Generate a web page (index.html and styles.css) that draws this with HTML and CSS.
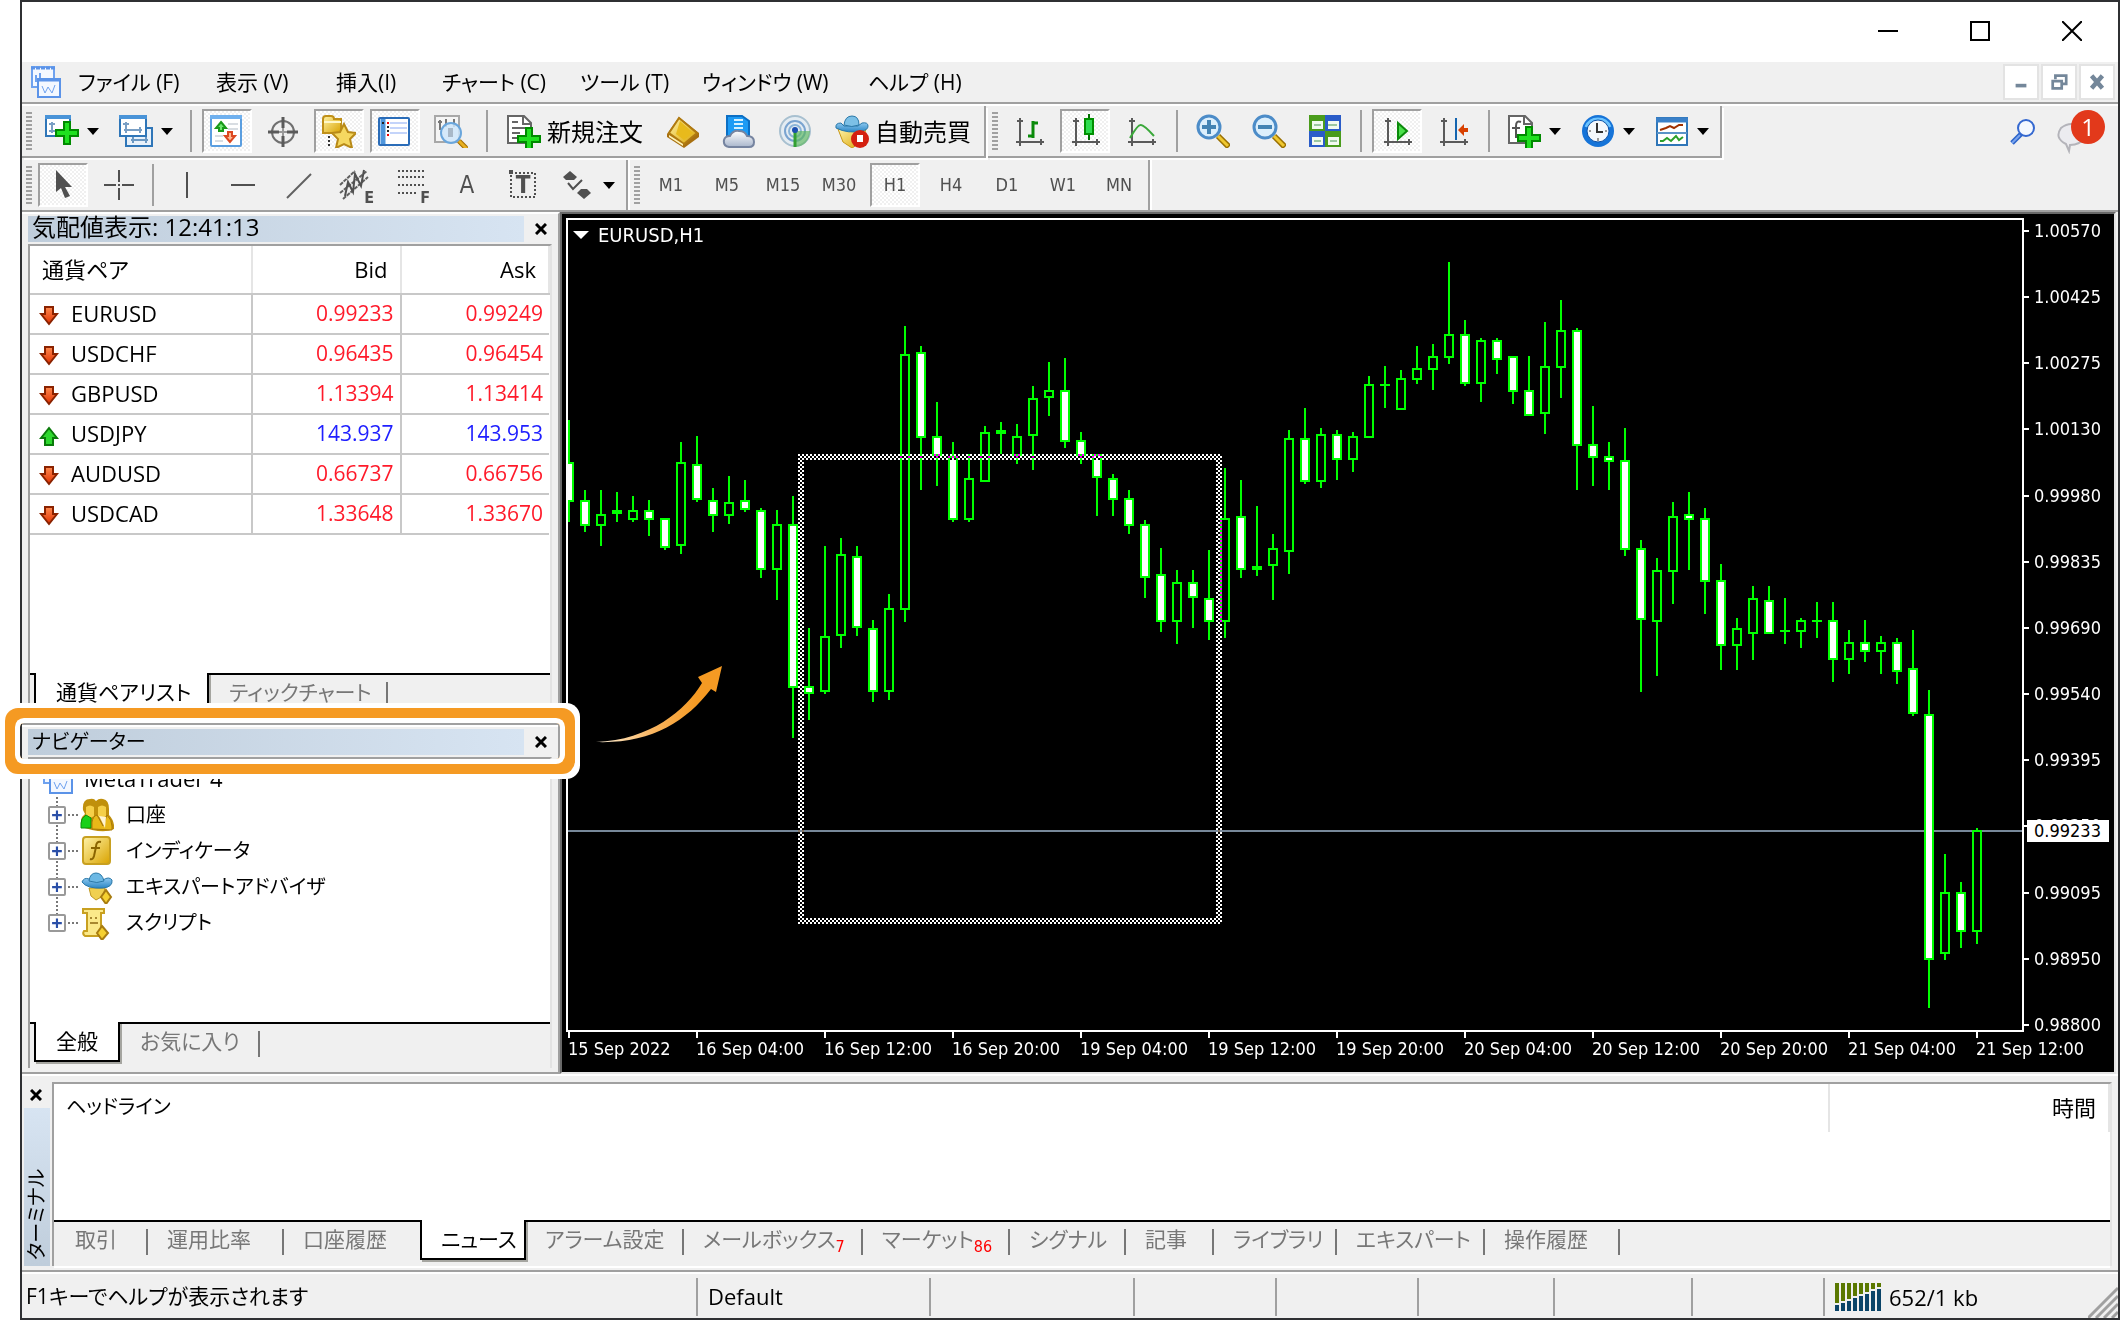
FILE: index.html
```html
<!DOCTYPE html>
<html lang="ja">
<head>
    <meta charset="UTF-8">
    <meta name="viewport" content="width=device-width, initial-scale=1.0">
    <title>MetaTrader 4</title>
    <link rel="stylesheet" href="styles.css">
</head>
<body>
    <svg class="defs" aria-hidden="true">
        <defs>
            <linearGradient id="gGold" x1="0" y1="0" x2="1" y2="1"><stop offset="0" stop-color="#fff3a8"/><stop offset="1" stop-color="#d9a300"/></linearGradient>
            <linearGradient id="gBlue" x1="0" y1="0" x2="0" y2="1"><stop offset="0" stop-color="#8cc8f0"/><stop offset="1" stop-color="#2b86c4"/></linearGradient>
            <linearGradient id="gRed" x1="0" y1="0" x2="0" y2="1"><stop offset="0" stop-color="#ff8a50"/><stop offset="1" stop-color="#e03000"/></linearGradient>
            <linearGradient id="gCloud" x1="0" y1="0" x2="0" y2="1"><stop offset="0" stop-color="#ffffff"/><stop offset="1" stop-color="#a9b6cc"/></linearGradient>
            <g id="plus"><path d="M8 0h8v8h8v8h-8v8H8v-8H0V8h8z" fill="#008a00"/><path d="M10 2h4v8h8v4h-8v8h-4v-8H2v-4h8z" fill="#1fe01f"/></g>
            <g id="axes" fill="none" stroke="#5a5a5a" stroke-width="2"><path d="M8 4v28M4 28h28"/><path d="M5 7h6M29 25v6" /></g>
            <symbol id="i-app" viewBox="0 0 34 34"><rect x="2" y="2" width="22" height="20" fill="#f4f8ff" stroke="#6fa2ef" stroke-width="2"/><path d="M1 3h24" stroke="#5b93e8" stroke-width="3" stroke-dasharray="4 1"/><path d="M6 10v6h8M10 8v10" fill="none" stroke="#6fa2ef" stroke-width="2"/><rect x="8" y="14" width="22" height="18" fill="#f4f8ff" stroke="#5b93e8" stroke-width="2"/><path d="M7 15h24" stroke="#5b93e8" stroke-width="3"/><path d="M12 21l3 7 3-6 4 6 3-8" fill="none" stroke="#6fa2ef" stroke-width="1"/></symbol>
            <symbol id="i-newchart" viewBox="0 0 34 34"><rect x="1" y="2" width="24" height="20" fill="#fff" stroke="#2f76b8" stroke-width="2"/><path d="M0 3h26" stroke="#4a94d8" stroke-width="4"/><path d="M7 8v11M4 10h6M4 17h10" stroke="#7a9fc4" stroke-width="2"/><use href="#plus" x="10" y="7"/></symbol>
            <symbol id="i-profiles" viewBox="0 0 34 34"><rect x="7" y="14" width="26" height="18" fill="#e8f1fa" stroke="#2f76b8" stroke-width="2"/><path d="M12 26h17M14 23v6M27 23v6" stroke="#6b98c2" stroke-width="2"/><rect x="1" y="2" width="26" height="20" fill="#fff" stroke="#2f76b8" stroke-width="2"/><path d="M0 3h28" stroke="#4a94d8" stroke-width="4"/><path d="M7 8v11M4 10h6M5 16h18M21 13v6" stroke="#7a9fc4" stroke-width="2"/></symbol>
            <symbol id="i-market" viewBox="0 0 34 34"><rect x="1" y="2" width="30" height="30" rx="1" fill="#fff" stroke="#5a9ee0" stroke-width="2"/><path d="M0 3h32" stroke="#6fb0ee" stroke-width="4"/><path d="M18 10h10M18 15h10M5 22h8M5 27h8" stroke="#d8dde2" stroke-width="2"/><path d="M11 8l5 6h-3v3H9v-3H6z" fill="#6ee86e" stroke="#1a9a1a" stroke-width="2"/><path d="M20 28l-5-6h3v-4h4v4h3z" fill="#ffb890" stroke="#dc4820" stroke-width="2"/></symbol>
            <symbol id="i-cross" viewBox="0 0 34 34"><circle cx="17" cy="18" r="11" fill="none" stroke="#707070" stroke-width="2"/><path d="M17 3v11M17 22v11M2 18h11M21 18h11" stroke="#5a5a5a" stroke-width="3"/><path d="M17 14v8M13 18h8" stroke="#999" stroke-width="2"/></symbol>
            <symbol id="i-nav" viewBox="0 0 34 34"><path d="M1 19V5q0-3 3-3h5q3 0 3 3h7v14z" fill="url(#gGold)" stroke="#c09018" stroke-width="2"/><path d="M2 8h17" stroke="#fff8c8" stroke-width="2"/><path d="M7 22v11" stroke="#333" stroke-width="2" stroke-dasharray="2 2"/><path d="M22 10l4 8 8 1-6 6 2 9-8-4-8 4 2-9-6-6 8-1z" fill="#f5d860" stroke="#b88a18" stroke-width="2"/></symbol>
            <symbol id="i-terminal" viewBox="0 0 34 34"><rect x="1" y="4" width="30" height="27" rx="1" fill="#fff" stroke="#2a6cb8" stroke-width="2"/><path d="M5 5v25" stroke="#4f96dc" stroke-width="5"/><path d="M12 9h17M12 14h17M12 19h17" stroke="#c4d4fa" stroke-width="2"/><path d="M10 8v2M10 20v2" stroke="#e00" stroke-width="2"/><path d="M10 12v2M10 16v2M5 8v2" stroke="#222" stroke-width="2"/></symbol>
            <symbol id="i-tester" viewBox="0 0 34 34"><rect x="1" y="2" width="24" height="26" fill="#f5f5f5" stroke="#a8a8a8" stroke-width="2"/><path d="M6 6v10M4 8h4M12 5v8M20 5v8" stroke="#777" stroke-width="2"/><path d="M25 27l9 9" stroke="#a06a00" stroke-width="5"/><path d="M25 27l9 9" stroke="#e8b020" stroke-width="3"/><circle cx="17" cy="19" r="10" fill="#cfe6fa" fill-opacity=".85" stroke="#6aa6dc" stroke-width="2"/><path d="M14 14v9h5v-9z" fill="#a8b8c8"/></symbol>
            <symbol id="i-order" viewBox="0 0 34 34"><path d="M1 2h16l7 7v20H1z" fill="#fff" stroke="#666" stroke-width="2"/><path d="M16 2v8h8" fill="none" stroke="#666" stroke-width="2"/><path d="M5 8h6M5 14h14M5 19h8M5 24h6" stroke="#666" stroke-width="2"/><use href="#plus" x="10" y="13"/></symbol>
            <symbol id="i-book" viewBox="0 0 34 34"><path d="M1 20L13 3l20 16v4L18 34 1 23z" fill="#a87010"/><path d="M13 4l18 15-13 11L3 19z" fill="url(#gGold)" stroke="#b07a10" stroke-width="2"/><path d="M14 7l13 12-9 7-8-6z" fill="#e8ba1c"/><path d="M3 21l14 9v2L3 23z" fill="#fff4b8"/></symbol>
            <symbol id="i-server" viewBox="0 0 34 34"><path d="M5 2h15l7 5v15H5z" fill="#1d9bf5" stroke="#0c6fc4" stroke-width="2"/><path d="M12 6h9M12 10h9M12 14h9" stroke="#d4f0ff" stroke-width="2"/><path d="M7 33q-6-1-5-7 1-4 6-4 3-6 9-5 6 0 8 5 7 0 7 6 0 5-5 5z" fill="url(#gCloud)" stroke="#7684a0" stroke-width="2"/></symbol>
            <symbol id="i-signal" viewBox="0 0 34 34"><circle cx="17" cy="17" r="15" fill="#e4ecf2" stroke="#a8c0d0" stroke-width="2"/><circle cx="17" cy="17" r="10" fill="none" stroke="#7aa4d0" stroke-width="2"/><circle cx="17" cy="17" r="6" fill="none" stroke="#8ab4d8" stroke-width="2"/><path d="M17 17v16q14-1 15-16z" fill="#5cb85c" fill-opacity=".65"/><path d="M17 17v16" stroke="#32a032" stroke-width="3"/><circle cx="17" cy="16" r="3" fill="#1b4fb0"/></symbol>
            <symbol id="i-auto" viewBox="0 0 34 34"><path d="M3 15h28l-4 13-10 6-9-6z" fill="url(#gGold)" stroke="#c89818" stroke-width="1"/><path d="M1 14q-1-5 5-5l3 3h14l4-3q6-1 6 3 0 4-6 5-14 3-26-3z" fill="url(#gBlue)" stroke="#2a78a8" stroke-width="1"/><path d="M9 11q1-9 8-9t7 9q-7 3-15 0z" fill="#7cc0e6" stroke="#2a78a8" stroke-width="1"/><circle cx="25" cy="25" r="9" fill="#d42010"/><rect x="22" y="21" width="6" height="7" fill="#fff"/></symbol>
            <symbol id="i-bars" viewBox="0 0 34 34"><use href="#axes"/><path d="M21 7v17M21 9h5M16 22h5" stroke="#0a8a0a" stroke-width="3" fill="none"/></symbol>
            <symbol id="i-candles" viewBox="0 0 34 34"><use href="#axes"/><path d="M21 0v26" stroke="#007000" stroke-width="2"/><rect x="17" y="5" width="8" height="15" fill="#2fdc4f" stroke="#009000" stroke-width="2"/></symbol>
            <symbol id="i-line" viewBox="0 0 34 34"><use href="#axes"/><path d="M6 24q8-14 11-13 3 0 13 11" fill="none" stroke="#3aa83a" stroke-width="2"/></symbol>
            <g id="glass"><path d="M22 22l11 11" stroke="#9a7000" stroke-width="6"/><path d="M22 22l10 10" stroke="#f0c830" stroke-width="3"/><circle cx="13" cy="13" r="11" fill="#dceffc" stroke="#4c8cc8" stroke-width="3"/></g>
            <symbol id="i-zoomin" viewBox="0 0 34 34"><use href="#glass"/><path d="M13 6v14M6 13h14" stroke="#4484b4" stroke-width="4"/></symbol>
            <symbol id="i-zoomout" viewBox="0 0 34 34"><use href="#glass"/><path d="M6 13h14" stroke="#4484b4" stroke-width="4"/></symbol>
            <symbol id="i-tile" viewBox="0 0 34 34"><path d="M1 1h16v16H1zM17 17h16v16H17z" fill="#4a9c1c"/><path d="M17 1h16v16H17zM1 17h16v16H1z" fill="#2a5cc8"/><path d="M4 7h11v8H4zM20 7h11v8H20zM4 23h11v8H4zM20 23h11v8H20z" fill="#f2faf0"/><path d="M6 11h7M20 11h9M6 27h7M22 27h7" stroke="#9cc8a0" stroke-width="2"/></symbol>
            <symbol id="i-scroll" viewBox="0 0 34 34"><use href="#axes"/><path d="M18 9l9 8-9 8z" fill="#4ce04c" stroke="#0a8a0a" stroke-width="2"/></symbol>
            <symbol id="i-shift" viewBox="0 0 34 34"><use href="#axes"/><path d="M20 4v22" stroke="#1565b0" stroke-width="2"/><path d="M22 16l6-6v4h4v4h-4v4z" fill="#d84000"/></symbol>
            <symbol id="i-ind" viewBox="0 0 34 34"><path d="M2 2h16l7 7v20H2z" fill="#fff" stroke="#666" stroke-width="2"/><path d="M17 2v8h8" fill="none" stroke="#666" stroke-width="2"/><path d="M14 8q-5-2-5 4v12M5 14h8" fill="none" stroke="#555" stroke-width="2"/><use href="#plus" x="10" y="12"/></symbol>
            <symbol id="i-clock" viewBox="0 0 34 34"><circle cx="17" cy="17" r="16" fill="#1674d8"/><path d="M5 13a13 13 0 0 1 24 0" stroke="#6cc4ff" stroke-width="3" fill="none"/><circle cx="17" cy="17" r="11" fill="#f4f8fc" stroke="#0c52a8" stroke-width="1"/><path d="M16 9v9h6" fill="none" stroke="#333" stroke-width="2"/><path d="M17 24v3M8 17h2M26 17h-2" stroke="#999" stroke-width="2"/></symbol>
            <symbol id="i-tmpl" viewBox="0 0 34 34"><rect x="2" y="4" width="30" height="27" fill="#fff" stroke="#2f76b8" stroke-width="2"/><path d="M1 6h32" stroke="#3a80c8" stroke-width="5"/><path d="M2 19h30" stroke="#5a94c8" stroke-width="2"/><path d="M5 16l6-2 4-2 4 2 5-3h4" fill="none" stroke="#a03000" stroke-width="2"/><path d="M5 27h3l4-3 4 3 5-5 3 4 4-3" fill="none" stroke="#2aa02a" stroke-width="2"/></symbol>
            <symbol id="i-search" viewBox="0 0 28 28"><path d="M12 16L3 25" stroke="#2a62c8" stroke-width="5"/><path d="M11 17l-8 8" stroke="#7aa4ee" stroke-width="2"/><circle cx="17" cy="10" r="8" fill="#f4f8ff" stroke="#3468d0" stroke-width="2"/></symbol>
            <symbol id="i-chat" viewBox="0 0 34 34"><path d="M4 8q10-8 22 0 6 9-4 15-4 2-9 2l-1 6-3-7q-12-6-5-16z" fill="#ececf0" stroke="#b4b4ba" stroke-width="2"/></symbol>
            <symbol id="i-arrow" viewBox="0 0 34 34"><path d="M10 2v22l5-4 4 10 5-2-5-9h7z" fill="#505050"/></symbol>
            <symbol id="i-plus" viewBox="0 0 34 34"><path d="M17 2v12M17 20v12M2 17h12M20 17h12" stroke="#505050" stroke-width="2"/><path d="M16 17h2" stroke="#505050" stroke-width="2"/></symbol>
            <symbol id="i-vline" viewBox="0 0 34 34"><path d="M17 4v26" stroke="#505050" stroke-width="2"/></symbol>
            <symbol id="i-hline" viewBox="0 0 34 34"><path d="M5 17h24" stroke="#505050" stroke-width="2"/></symbol>
            <symbol id="i-trend" viewBox="0 0 34 34"><path d="M5 30L29 6" stroke="#606060" stroke-width="2"/></symbol>
            <symbol id="i-channel" viewBox="0 0 34 34"><path d="M2 17L17 3M2 25L29 3M5 31L30 9" stroke="#606060" stroke-width="2" stroke-dasharray="4 1"/><path d="M7 28l3-14 5 10 2-18 6 12 3-16" fill="none" stroke="#505050" stroke-width="2"/></symbol>
            <symbol id="i-fib" viewBox="0 0 34 34"><path d="M4 3h26M4 9h26M4 17h26M4 25h18" stroke="#505050" stroke-width="2" stroke-dasharray="2 2"/></symbol>
            <symbol id="i-label" viewBox="0 0 34 34"><path d="M5 5h24v24H5V5" fill="none" stroke="#505050" stroke-width="2" stroke-dasharray="2 2"/><path d="M3 2h4v4H3z" fill="#505050"/></symbol>
            <symbol id="i-shapes" viewBox="0 0 34 34"><path d="M9 3l7 6-3 3H5L2 9zM23 31l-7-6 4-4h6l4 4z" fill="#505050"/><path d="M7 15l5 6 9-9" fill="none" stroke="#505050" stroke-width="2"/></symbol>
            <symbol id="i-down" viewBox="0 0 20 20"><path d="M6 1h8v7h4l-8 10L2 8h4z" fill="url(#gRed)" stroke="#8a2200" stroke-width="2"/></symbol>
            <symbol id="i-up" viewBox="0 0 20 20"><path d="M6 19h8v-7h4L10 2 2 12h4z" fill="#2fd82f" stroke="#0a7a0a" stroke-width="2"/></symbol>
            <symbol id="i-users" viewBox="0 0 34 34"><path d="M3 12q-1-11 7-11 4-1 6 2 3-3 7-2 6 1 6 10v6q4 4 5 10v4q-8 4-22 1L1 29v-7q1-4 4-6z" fill="#c0900c"/><path d="M6 9q4-3 8 0v9q-4 3-8 0zM18 9q4-3 8 0v9q-4 3-8 0z" fill="#f5cf48"/><path d="M6 17q-5 3-5 8v5h10V20z" fill="#18d018" stroke="#0a900a"/><path d="M12 31v-7q1-6 5-7l6 11 4-11q5 5 5 11v4z" fill="#e8b818" stroke="#a87808"/><path d="M19 18l6 12 1-11z" fill="#fff4d0"/></symbol>
            <symbol id="i-func" viewBox="0 0 34 34"><rect x="3" y="3" width="27" height="27" rx="3" fill="url(#gGold)" stroke="#c8a020" stroke-width="2"/><path d="M21 8q-5-1-5 5l-2 9q-1 4-4 3M11 14h9" fill="none" stroke="#8a6400" stroke-width="2"/></symbol>
            <symbol id="i-expert" viewBox="0 0 34 34"><path d="M9 18h16l-2 8-7 4-5-4z" fill="#f0d050" stroke="#c09820"/><path d="M2 12q2-5 7-3l14 1q6-4 9 0 1 7-9 8-16 1-21-6z" fill="url(#gBlue)" stroke="#2a78a8"/><path d="M9 11q1-8 7-8t8 8q-7 3-15 0z" fill="#6cb8e4" stroke="#2a78a8"/><path d="M26 20l5 7-5 7-5-7z" fill="#f5d030" stroke="#a87c10" stroke-width="2"/></symbol>
            <symbol id="i-script" viewBox="0 0 34 34"><path d="M3 3h21v4h-3v18h3v5H5q-3-2-1-5h3V7H3z" fill="#fbe98a" stroke="#c8a020" stroke-width="2"/><path d="M10 12h2M15 12h2M10 17h8" stroke="#a88830" stroke-width="2"/><path d="M22 20l6 7-6 7-5-7z" fill="#f5d030" stroke="#a87c10" stroke-width="2"/></symbol>
            <pattern id="checks" width="4" height="4" patternUnits="userSpaceOnUse" x="230" y="234"><path d="M0 0h2v2H0zM2 2h2v2H2z" fill="#fff"/></pattern>
            <linearGradient id="gArrow"><stop offset="0" stop-color="#fff3dc"/><stop offset=".45" stop-color="#f9b560"/><stop offset=".8" stop-color="#f59a23"/></linearGradient>
        </defs>
    </svg>

    <div class="window">
        <header class="titlebar">
            <button aria-label="最小化"><svg viewBox="0 0 20 20"><path d="M0 10h20"/></svg></button>
            <button aria-label="最大化"><svg viewBox="0 0 20 20"><path d="M1 1h18v18H1z"/></svg></button>
            <button aria-label="閉じる"><svg viewBox="0 0 20 20"><path d="M0 0l20 20M20 0L0 20"/></svg></button>
        </header>

        <nav class="menubar">
            <svg class="icon"><use href="#i-app"/></svg>
            <div class="menus">
                <a href="#">ファイル (F)</a>
                <a href="#">表示 (V)</a>
                <a href="#">挿入(I)</a>
                <a href="#">チャート (C)</a>
                <a href="#">ツール (T)</a>
                <a href="#">ウィンドウ (W)</a>
                <a href="#">ヘルプ (H)</a>
            </div>
            <div class="mdi">
                <button aria-label="チャートを最小化"><svg viewBox="0 0 20 20"><path d="M4 14h12" stroke-width="4"/></svg></button>
                <button aria-label="チャートを元に戻す"><svg viewBox="0 0 20 20"><path d="M6 7V3h12v9h-4" stroke-width="3"/><path d="M3 9h10v8H3z" stroke-width="3"/></svg></button>
                <button aria-label="チャートを閉じる"><svg viewBox="0 0 20 20"><path d="M4 3l12 14M16 3L4 17" stroke-width="5"/></svg></button>
            </div>
        </nav>

        <div class="toolrow">
            <div class="band">
                <span class="grip"></span>
                <button class="tool drop" aria-label="新規チャート"><svg class="icon"><use href="#i-newchart"/></svg></button>
                <button class="tool drop" aria-label="表示設定"><svg class="icon"><use href="#i-profiles"/></svg></button>
                <span class="sep"></span>
                <button class="tool on" aria-label="気配値表示"><svg class="icon"><use href="#i-market"/></svg></button>
                <button class="tool" aria-label="データウィンドウ"><svg class="icon"><use href="#i-cross"/></svg></button>
                <button class="tool on" aria-label="ナビゲーター"><svg class="icon"><use href="#i-nav"/></svg></button>
                <button class="tool on" aria-label="ターミナル"><svg class="icon"><use href="#i-terminal"/></svg></button>
                <button class="tool" aria-label="ストラテジーテスター"><svg class="icon"><use href="#i-tester"/></svg></button>
                <span class="sep"></span>
                <button class="tool wide"><svg class="icon"><use href="#i-order"/></svg>新規注文</button>
                <button class="tool" aria-label="MetaEditor"><svg class="icon"><use href="#i-book"/></svg></button>
                <button class="tool" aria-label="VPS"><svg class="icon"><use href="#i-server"/></svg></button>
                <button class="tool" aria-label="シグナル"><svg class="icon"><use href="#i-signal"/></svg></button>
                <button class="tool wide"><svg class="icon"><use href="#i-auto"/></svg>自動売買</button>
            </div>
            <div class="band">
                <span class="grip"></span>
                <button class="tool" aria-label="バーチャート"><svg class="icon"><use href="#i-bars"/></svg></button>
                <button class="tool on" aria-label="ローソク足"><svg class="icon"><use href="#i-candles"/></svg></button>
                <button class="tool" aria-label="ラインチャート"><svg class="icon"><use href="#i-line"/></svg></button>
                <span class="sep"></span>
                <button class="tool" aria-label="拡大"><svg class="icon"><use href="#i-zoomin"/></svg></button>
                <button class="tool" aria-label="縮小"><svg class="icon"><use href="#i-zoomout"/></svg></button>
                <button class="tool" aria-label="整列"><svg class="icon"><use href="#i-tile"/></svg></button>
                <span class="sep"></span>
                <button class="tool on" aria-label="自動スクロール"><svg class="icon"><use href="#i-scroll"/></svg></button>
                <button class="tool" aria-label="チャートシフト"><svg class="icon"><use href="#i-shift"/></svg></button>
                <span class="sep"></span>
                <button class="tool drop" aria-label="インディケータ"><svg class="icon"><use href="#i-ind"/></svg></button>
                <button class="tool drop" aria-label="時間足設定"><svg class="icon"><use href="#i-clock"/></svg></button>
                <button class="tool drop" aria-label="定型チャート"><svg class="icon"><use href="#i-tmpl"/></svg></button>
            </div>
            <div class="tray">
                <button aria-label="検索"><svg class="search"><use href="#i-search"/></svg></button>
                <button class="chat" aria-label="チャット"><svg class="icon"><use href="#i-chat"/></svg><span class="badge">1</span></button>
            </div>
        </div>

        <div class="toolrow lines">
            <div class="band">
                <span class="grip"></span>
                <button class="tool on" aria-label="カーソル"><svg class="icon"><use href="#i-arrow"/></svg></button>
                <button class="tool" aria-label="クロスヘア"><svg class="icon"><use href="#i-plus"/></svg></button>
                <span class="sep"></span>
                <button class="tool" aria-label="垂直線"><svg class="icon"><use href="#i-vline"/></svg></button>
                <button class="tool" aria-label="水平線"><svg class="icon"><use href="#i-hline"/></svg></button>
                <button class="tool" aria-label="トレンドライン"><svg class="icon"><use href="#i-trend"/></svg></button>
                <button class="tool sub"><svg class="icon"><use href="#i-channel"/></svg><small>E</small></button>
                <button class="tool sub"><svg class="icon"><use href="#i-fib"/></svg><small>F</small></button>
                <button class="tool letter">A</button>
                <button class="tool letter framed"><svg class="icon"><use href="#i-label"/></svg><b>T</b></button>
                <button class="tool drop" aria-label="矢印"><svg class="icon"><use href="#i-shapes"/></svg></button>
            </div>
            <div class="band">
                <span class="grip"></span>
                <button class="tool">M1</button>
                <button class="tool">M5</button>
                <button class="tool">M15</button>
                <button class="tool">M30</button>
                <button class="tool on">H1</button>
                <button class="tool">H4</button>
                <button class="tool">D1</button>
                <button class="tool">W1</button>
                <button class="tool">MN</button>
            </div>
        </div>

        <main class="work">
            <aside class="side">
                <section class="panel market">
                    <div class="panel-head">
                        <h2>気配値表示: 12:41:13</h2>
                        <button class="close" aria-label="閉じる"><svg viewBox="0 0 12 12"><path d="M1 1l10 10M11 1L1 11"/></svg></button>
                    </div>
                    <div class="box">
                        <table class="quotes">
                            <thead>
                                <tr><th>通貨ペア</th><th>Bid</th><th>Ask</th></tr>
                            </thead>
                            <tbody>
                                <tr><td><svg><use href="#i-down"/></svg>EURUSD</td><td>0.99233</td><td>0.99249</td></tr>
                                <tr><td><svg><use href="#i-down"/></svg>USDCHF</td><td>0.96435</td><td>0.96454</td></tr>
                                <tr><td><svg><use href="#i-down"/></svg>GBPUSD</td><td>1.13394</td><td>1.13414</td></tr>
                                <tr class="up"><td><svg><use href="#i-up"/></svg>USDJPY</td><td>143.937</td><td>143.953</td></tr>
                                <tr><td><svg><use href="#i-down"/></svg>AUDUSD</td><td>0.66737</td><td>0.66756</td></tr>
                                <tr><td><svg><use href="#i-down"/></svg>USDCAD</td><td>1.33648</td><td>1.33670</td></tr>
                            </tbody>
                        </table>
                        <div class="tabs">
                            <button class="active">通貨ペアリスト</button>
                            <button>ティックチャート</button>
                        </div>
                    </div>
                </section>

                <section class="panel navigator">
                    <div class="panel-head">
                        <h2>ナビゲーター</h2>
                        <button class="close" aria-label="閉じる"><svg viewBox="0 0 12 12"><path d="M1 1l10 10M11 1L1 11"/></svg></button>
                        <span class="highlight"></span>
                    </div>
                    <div class="box">
                        <div class="root"><svg class="icon"><use href="#i-app"/></svg>MetaTrader 4</div>
                        <ul class="tree">
                            <li><button aria-label="展開">+</button><svg class="icon"><use href="#i-users"/></svg>口座</li>
                            <li><button aria-label="展開">+</button><svg class="icon"><use href="#i-func"/></svg>インディケータ</li>
                            <li><button aria-label="展開">+</button><svg class="icon"><use href="#i-expert"/></svg>エキスパートアドバイザ</li>
                            <li><button aria-label="展開">+</button><svg class="icon"><use href="#i-script"/></svg>スクリプト</li>
                        </ul>
                        <div class="tabs">
                            <button class="active">全般</button>
                            <button>お気に入り</button>
                        </div>
                    </div>
                </section>
            </aside>

            <section class="chart">
                <div class="plot">
                    <svg class="canvas">
                        <path class="price" d="M0 611h4000"/>
                        <g id="candles"></g>
                        <path class="drag" d="M230 234h424v470H230zM236 240v458h412V240z"/>
                        <path class="swoosh" d="M28 522C82 520 118 490 134 463L130 457 154 446 148 472 143 469C118 502 82 524 28 522z"/>
                    </svg>
                    <button class="symbol">EURUSD,H1</button>
                </div>
                <ul class="prices">
                    <li>1.00570</li><li>1.00425</li><li>1.00275</li><li>1.00130</li><li>0.99980</li>
                    <li>0.99835</li><li>0.99690</li><li>0.99540</li><li>0.99395</li><li>0.99250</li>
                    <li>0.99095</li><li>0.98950</li><li>0.98800</li>
                    <li class="last">0.99233</li>
                </ul>
                <ul class="times">
                    <li>15 Sep 2022</li><li>16 Sep 04:00</li><li>16 Sep 12:00</li><li>16 Sep 20:00</li>
                    <li>19 Sep 04:00</li><li>19 Sep 12:00</li><li>19 Sep 20:00</li><li>20 Sep 04:00</li>
                    <li>20 Sep 12:00</li><li>20 Sep 20:00</li><li>21 Sep 04:00</li><li>21 Sep 12:00</li>
                </ul>
            </section>
        </main>

        <section class="terminal">
            <div class="spine">
                <button class="close" aria-label="閉じる"><svg viewBox="0 0 12 12"><path d="M1 1l10 10M11 1L1 11"/></svg></button>
                <h2>ターミナル</h2>
            </div>
            <div class="box">
                <table class="news">
                    <thead><tr><th>ヘッドライン</th><th>時間</th></tr></thead>
                </table>
                <div class="tabs">
                    <button>取引</button>
                    <button>運用比率</button>
                    <button>口座履歴</button>
                    <button class="active">ニュース</button>
                    <button>アラーム設定</button>
                    <button>メールボックス<sub>7</sub></button>
                    <button>マーケット<sub>86</sub></button>
                    <button>シグナル</button>
                    <button>記事</button>
                    <button>ライブラリ</button>
                    <button>エキスパート</button>
                    <button>操作履歴</button>
                </div>
            </div>
        </section>

        <footer class="status">
            <span>F1キーでヘルプが表示されます</span>
            <span>Default</span>
            <span></span>
            <span></span>
            <span></span>
            <span></span>
            <span></span>
            <span></span>
            <span class="traffic">
                <svg viewBox="0 0 48 28"><path stroke="#5a7800" d="M2 0v20M8 0v18M14 0v16M20 0v13M26 0v11M32 0v9M38 0v6M44 0v4"/><path stroke="#0a4468" d="M2 28v-6M8 28v-8M14 28V18M20 28V15M26 28V13M32 28V11M38 28V8M44 28V6"/></svg>
                652/1 kb
            </span>
            <svg class="sizer" viewBox="0 0 30 32"><path d="M0 32L30 2M8 32l22-22M16 32l14-14M24 32l6-6"/></svg>
        </footer>
    </div>

    <script src="chart.js"></script>
</body>
</html>
```
FILE: styles.css
```css
* {
    box-sizing: border-box;
}
body {
    margin: 0;
    padding-left: 20px;
    background: #fff;
    color: #000;
    font-family: "Open Sans", "Noto Sans CJK JP", sans-serif;
    font-size: 22px;
    line-height: 26px;
    font-feature-settings: "palt";
}
button {
    margin: 0;
    padding: 0;
    border: 0;
    background: none;
    color: inherit;
    font: inherit;
    font-feature-settings: inherit;
    white-space: nowrap;
}
h2 {
    margin: 0;
    font-size: 20px;
    font-weight: 400;
}
ul {
    margin: 0;
    padding: 0;
    list-style: none;
}
a {
    color: inherit;
    text-decoration: none;
    white-space: nowrap;
}
.defs {
    position: absolute;
    width: 0;
    height: 0;
}
.icon {
    width: 34px;
    height: 34px;
    flex: none;
    overflow: visible;
}
.window {
    display: flex;
    flex-direction: column;
    min-height: 100vh;
    border: 2px solid #2f3033;
    background: #f0f0f0;
}

/* title bar */
.titlebar {
    display: flex;
    justify-content: flex-end;
    align-items: center;
    height: 60px;
    background: #fff;
}
.titlebar button {
    width: 92px;
    height: 58px;
}
.titlebar svg {
    width: 20px;
    height: 20px;
    fill: none;
    stroke: #000;
    stroke-width: 2;
}

/* menu */
.menubar {
    display: flex;
    align-items: center;
    height: 42px;
    padding: 0 3px 0 8px;
    border-bottom: 2px solid #a0a0a0;
    box-shadow: 0 2px #fff;
}
.menus {
    flex: 1;
    display: grid;
    grid-template-columns: 138px 120px 106px 138px 122px 166px 1fr;
    margin-left: 14px;
    font-size: 21px;
}
.mdi {
    display: flex;
    gap: 2px;
}
.mdi button {
    width: 36px;
    height: 36px;
    border: 2px solid #e3e3e3;
    background: #fff;
}
.mdi svg {
    display: block;
    width: 18px;
    height: 18px;
    margin: auto;
    fill: none;
    stroke: #74879a;
}

/* toolbars */
.toolrow {
    display: flex;
    height: 54px;
    padding-top: 2px;
}
.band {
    display: flex;
    align-items: center;
    gap: 6px;
    padding: 0 4px;
    border-right: 2px solid #a0a0a0;
    border-bottom: 2px solid #a0a0a0;
    box-shadow: 2px 2px #fff;
}
.band + .band {
    margin-left: 2px;
}
.lines {
    border-bottom: 2px solid #a0a0a0;
}
.lines .band {
    border-bottom: 0;
    box-shadow: 2px 0 #fff;
}
.grip {
    width: 6px;
    height: 38px;
    background: repeating-linear-gradient(#a0a0a0 0 2px, #f0f0f0 2px 4px);
}
.sep {
    width: 2px;
    height: 42px;
    margin: 0 4px;
    background: #a0a0a0;
}
.lines .sep {
    margin: 0 2px;
}
.tool {
    display: flex;
    align-items: center;
    justify-content: center;
    width: 50px;
    height: 44px;
    border: 2px solid transparent;
    color: #505050;
    font-family: "DejaVu Sans Condensed", "DejaVu Sans", sans-serif;
    font-size: 18px;
}
.tool.on {
    border-color: #a0a0a0 #fff #fff #a0a0a0;
    background: repeating-conic-gradient(#f0f0f0 0 25%, #fff 0 50%) 0 0 / 4px 4px;
}
.tool.drop {
    width: 68px;
    gap: 8px;
}
.tool.drop::after {
    content: "";
    border: 6px solid transparent;
    border-top: 7px solid #000;
    border-bottom: 0;
}
.tool.wide {
    width: 154px;
    gap: 6px;
    color: #000;
    font-family: "Noto Sans CJK JP", sans-serif;
    font-size: 24px;
    line-height: 24px;
}
.tool.sub,
.tool.framed {
    position: relative;
}
.tool small {
    position: absolute;
    right: 4px;
    bottom: 0;
    font-size: 16px;
    line-height: 14px;
    font-weight: 700;
    background: #f0f0f0;
}
.tool.letter {
    font-size: 24px;
}
.tool b {
    position: absolute;
}
.tray {
    display: flex;
    align-items: center;
    gap: 20px;
    margin-left: auto;
    padding-right: 13px;
}
.search {
    display: block;
    width: 28px;
    height: 28px;
}
.chat {
    position: relative;
    width: 48px;
    height: 44px;
    text-align: left;
}
.chat .icon {
    margin-top: 10px;
}
.badge {
    position: absolute;
    top: 0;
    right: 0;
    width: 34px;
    height: 34px;
    border-radius: 50%;
    background: #e2391b;
    color: #fff;
    font-size: 24px;
    line-height: 34px;
    text-align: center;
}

/* work area */
.work {
    flex: 1;
    display: flex;
    min-height: 0;
}
.side {
    display: flex;
    flex-direction: column;
    width: 538px;
    border: 2px solid #a0a0a0;
    border-top-color: #fff;
    border-left: 0;
}
.panel {
    display: flex;
    flex-direction: column;
}
.market {
    flex: 22;
}
.navigator {
    flex: 15;
    border-top: 2px solid #a0a0a0;
}
.panel-head {
    display: flex;
    padding: 2px 0 2px 6px;
}
.navigator .panel-head {
    position: relative;
    border-top: 2px solid #fff;
}
.panel-head h2 {
    flex: 1;
    padding-left: 4px;
    line-height: 26px;
    background: linear-gradient(90deg, #bfcddb, #d7e4f2);
}
.market h2 {
    height: 26px;
    font-size: 24px;
    line-height: 22px;
}
.close {
    width: 34px;
    height: 26px;
}
.close svg {
    display: block;
    width: 12px;
    height: 12px;
    margin: auto;
    stroke: #000;
    stroke-width: 3;
}
.highlight {
    position: absolute;
    z-index: 2;
    inset: -4px -2px -2px -2px;
    border-radius: 4px;
    box-shadow: 0 0 0 5px #fff, 0 0 0 15px #f59a23, 0 0 0 20px #fff;
    pointer-events: none;
}
.box {
    flex: 1;
    display: flex;
    flex-direction: column;
    border: 2px solid #a0a0a0;
    border-right-color: #e3e3e3;
    border-bottom: 0;
    background: #fff;
}
.panel .box {
    margin: 0 6px 4px;
}

/* tables */
.quotes {
    width: 100%;
    table-layout: fixed;
    border-collapse: collapse;
}
.quotes th,
.quotes td {
    height: 40px;
    padding: 0 6px 2px;
    border-bottom: 2px solid #c8c8c8;
    border-right: 2px solid #c8c8c8;
    text-align: right;
}
.quotes th {
    height: 48px;
    padding: 0 12px 2px;
    border-right-color: #e5e5e5;
    font-weight: 400;
}
.quotes th:first-child {
    width: 222px;
    text-align: left;
}
.quotes td {
    color: #ff1a2a;
    font-size: 21px;
}
.quotes td:first-child {
    padding-left: 9px;
    color: #000;
    font-size: 22px;
    text-align: left;
}
.quotes td:last-child {
    border-right: 0;
}
.quotes .up td {
    color: #2020ff;
}
.quotes .up td:first-child {
    color: #000;
}
.quotes svg {
    width: 20px;
    height: 20px;
    margin-right: 12px;
    vertical-align: -4px;
}

/* tabs */
.tabs {
    display: flex;
    margin-top: auto;
    height: 46px;
    padding-left: 4px;
    border-top: 2px solid #000;
    background: #f0f0f0;
    color: #777;
    font-size: 21px;
}
.tabs button {
    position: relative;
    height: 34px;
    padding: 0 20px;
}
.tabs button::after {
    content: "";
    position: absolute;
    right: 0;
    top: 7px;
    width: 2px;
    height: 26px;
    background: #777;
}
.tabs .active {
    height: 40px;
    margin-top: -2px;
    border: 2px solid #000;
    border-top: 0;
    background: #fff;
    box-shadow: 2px 2px #a5a5a0;
    color: #000;
}
.tabs .active::after,
.tabs button:has(+ .active)::after {
    display: none;
}
.market .tabs button {
    padding-right: 16px;
}

/* navigator tree */
.root {
    display: flex;
    align-items: center;
    gap: 8px;
    height: 38px;
    padding-left: 12px;
}
.tree {
    margin-left: 26px;
    background: repeating-linear-gradient(#777 0 2px, #fff 2px 4px) 0 0 / 2px calc(100% - 18px) no-repeat;
    font-size: 20px;
}
.tree li {
    display: flex;
    align-items: center;
    height: 36px;
}
.tree button {
    position: relative;
    width: 18px;
    height: 18px;
    margin-left: -8px;
    border: 2px solid #999;
    border-radius: 2px;
    background: #fff;
    color: #2a4fa8;
    font-weight: 700;
    line-height: 13px;
}
.tree button::after {
    content: "";
    position: absolute;
    left: 18px;
    top: 6px;
    width: 10px;
    height: 2px;
    background: repeating-linear-gradient(90deg, #777 0 2px, #fff 2px 4px);
}
.tree .icon {
    margin: 0 12px 0 14px;
}

/* chart */
.chart {
    flex: 1;
    display: grid;
    grid-template-columns: 1fr 90px;
    grid-template-rows: 1fr 40px;
    padding: 4px 0 0 4px;
    border: 2px solid #696969;
    border-right-color: #e3e3e3;
    border-bottom-color: #e3e3e3;
    margin-right: 2px;
    background: #000;
    color: #fff;
    font-family: "DejaVu Sans Condensed", "DejaVu Sans", sans-serif;
    font-size: 18px;
}
.plot {
    position: relative;
    border: 2px solid #fff;
}
.canvas {
    position: absolute;
    width: 100%;
    height: 100%;
}
.price {
    fill: none;
    stroke: #778899;
    stroke-width: 2;
}
.candle {
    fill: #000;
    stroke: #0f0;
    stroke-width: 2;
}
.candle.bear {
    fill: #fff;
}
.drag {
    fill: url(#checks);
    fill-rule: evenodd;
    mix-blend-mode: difference;
}
.swoosh {
    fill: url(#gArrow);
}
.symbol {
    position: relative;
    display: flex;
    align-items: center;
    gap: 9px;
    margin: 2px 0 0 5px;
    font-size: 20px;
}
.symbol::before {
    content: "";
    border: 8px solid transparent;
    border-top-color: #fff;
    border-bottom: 0;
}
.prices {
    position: relative;
    display: flex;
    flex-direction: column;
    justify-content: space-between;
    padding-top: 2px;
    margin-bottom: -4px;
}
.prices li {
    display: flex;
    align-items: center;
    gap: 5px;
    height: 22px;
}
.prices li::before {
    content: "";
    width: 5px;
    height: 2px;
    background: #fff;
}
.prices .last {
    position: absolute;
    top: 602px;
    left: 3px;
    width: 82px;
    padding-left: 7px;
    background: #fff;
    color: #000;
}
.prices .last::before {
    display: none;
}
.times {
    grid-column: 1 / -1;
    display: flex;
    padding-left: 2px;
}
.times li {
    flex: 0 0 128px;
    height: 34px;
    line-height: 34px;
    white-space: nowrap;
    background: linear-gradient(#fff, #fff) 0 0 / 2px 6px no-repeat;
}

/* terminal */
.terminal {
    display: flex;
    padding: 8px 6px 4px 2px;
    box-shadow: inset 0 2px #fff;
    min-height: 196px;
}
.spine {
    display: flex;
    flex-direction: column;
    width: 28px;
}
.spine .close {
    width: 24px;
}
.spine h2 {
    flex: 1;
    width: 26px;
    padding-top: 6px;
    background: linear-gradient(#bfcddb, #d7e4f2);
    writing-mode: vertical-rl;
    text-orientation: sideways;
    transform: rotate(180deg);
}
.news {
    width: 100%;
    border-collapse: collapse;
}
.news th {
    height: 48px;
    padding: 0 12px 3px;
    border-right: 2px solid #e5e5e5;
    font-size: 20px;
    font-weight: 400;
    text-align: left;
}
.news th:last-child {
    width: 280px;
    font-size: 22px;
    text-align: right;
}
.terminal .tabs {
    display: grid;
    grid-template-columns: 92px 136px 136px 106px 158px 179px 147px 116px 88px 123px 148px 135px;
    padding-left: 2px;
    box-shadow: 0 2px #fff;
}
.terminal .tabs button {
    padding: 0 0 0 19px;
    text-align: left;
}
.tabs sub {
    color: #f00;
    font-family: "DejaVu Sans Condensed", "DejaVu Sans", sans-serif;
    font-size: 16px;
    line-height: 0;
}

/* status bar */
.status {
    position: relative;
    display: grid;
    grid-template-columns: 674px 233px 204px 142px 142px 136px 138px 132px 1fr;
    height: 48px;
    padding: 6px 0 2px;
    border-top: 2px solid #a0a0a0;
    box-shadow: inset 0 2px #fff;
}
.status span {
    padding-left: 10px;
    border-left: 2px solid #a0a0a0;
    line-height: 36px;
    white-space: nowrap;
}
.status span:first-child {
    padding-left: 4px;
    border: 0;
    font-size: 21px;
}
.status .traffic {
    display: flex;
    align-items: center;
    gap: 6px;
}
.traffic svg {
    width: 48px;
    height: 28px;
    stroke-width: 4;
}
.sizer {
    position: absolute;
    right: 0;
    bottom: 0;
    width: 30px;
    height: 32px;
    stroke: #a0a0a0;
    stroke-width: 3;
}
```
FILE: chart.js
```js
// high, low, body top, body bottom, 1 = bearish (filled)
var bars = [
    [420,522,462,502,1],[490,532,500,526,1],[490,546,514,526,0],[492,522,510,514,0],[496,522,510,520,0],
    [500,536,510,520,1],[518,550,518,548,1],[442,554,462,546,0],[436,502,464,500,1],[488,532,500,516,1],
    [476,524,502,516,0],[480,512,500,510,1],[508,578,510,570,1],[510,600,524,570,0],[496,738,524,688,1],
    [628,720,686,694,1],[546,694,636,692,0],[538,648,554,636,0],[546,636,556,628,1],[620,702,628,692,1],
    [594,700,608,692,0],[326,622,354,610,0],[346,490,352,438,1],[402,486,436,456,1],[442,522,456,520,1],
    [454,522,478,520,0],[426,482,432,482,0],[422,454,430,434,0],[424,464,436,456,0],[386,470,398,436,0],
    [362,416,390,398,0],[358,448,390,442,1],[432,464,440,456,1],[454,516,454,478,1],[474,516,478,500,1],
    [490,534,498,526,1],[520,598,524,578,1],[548,632,574,622,1],[570,644,582,622,0],[570,628,582,598,1],
    [550,640,598,622,1],[468,638,518,622,0],[480,578,516,570,1],[506,576,566,570,0],[534,600,548,566,0],
    [430,574,438,552,0],[408,484,438,482,1],[428,488,434,482,0],[430,480,434,460,1],[432,472,436,460,0],
    [376,438,384,438,0],[366,408,384,386,0],[370,410,378,410,0],[346,384,368,380,0],[344,390,356,370,0],
    [262,364,334,358,0],[320,386,334,384,1],[338,402,340,384,0],[338,374,340,360,1],[356,404,356,392,1],
    [356,416,390,416,1],[322,434,366,414,0],[300,398,330,368,0],[328,490,330,446,1],[406,486,444,458,1],
    [442,490,456,462,1],[428,556,460,550,1],[540,692,548,620,1],[558,676,570,622,0],[502,604,516,572,0],
    [492,570,514,520,1],[508,614,518,582,1],[564,670,580,646,1],[618,670,628,646,0],[586,660,598,634,0],
    [586,634,600,634,1],[598,644,630,632,0],[618,648,620,632,0],[602,638,620,622,0],[602,682,620,660,1],
    [630,674,642,660,0],[620,662,642,652,1],[636,674,642,652,0],[638,684,642,672,1],[630,716,668,714,1],
    [690,1008,714,960,1],[854,960,892,954,0],[882,948,892,932,1],[828,944,830,932,0]
];
var STEP = 16;
var TOP = 220;
var html = "";

bars.forEach(function (b, i) {
    var x = i * STEP + 1;
    var height = b[3] - b[2] - 2;
    html += '<path class="candle" d="M' + x + ' ' + (b[0] - TOP) + 'V' + (b[1] - TOP) + '"/>';
    html += '<path class="candle' + (b[4] ? ' bear' : '') + '" d="M' + (x - 4) + ' ' + (b[2] - TOP + 1) +
        'h8v' + height + 'h-8z"/>';
    // open equals close, draw a dash
    if (height === 0) {
        html += '<path class="candle" d="M' + (x - 5) + ' ' + (b[2] - TOP + 1) + 'h10"/>';
    }
});
document.getElementById("candles").innerHTML = html;
```
